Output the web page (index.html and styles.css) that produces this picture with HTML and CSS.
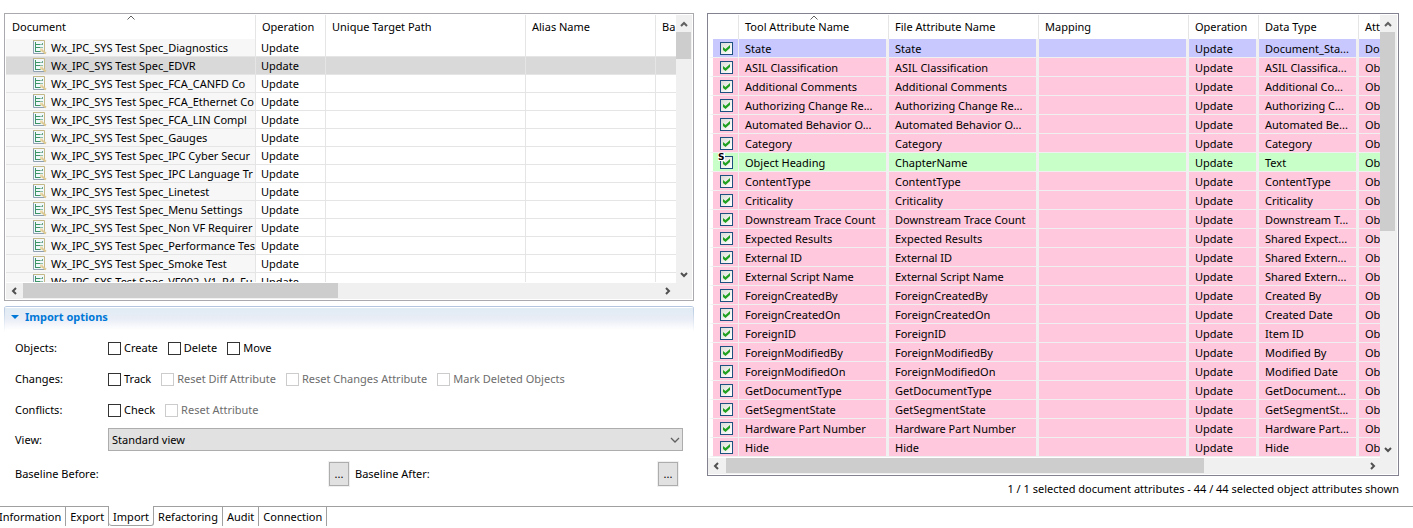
FILE: index.html
```html
<!DOCTYPE html>
<html lang="en">
<head>
<meta charset="utf-8">
<title>Import</title>
<link rel="stylesheet" href="styles.css">
</head>
<body>
<svg class="defs" aria-hidden="true">
  <symbol id="i-doc" viewBox="0 0 14 15">
    <path d="M0 1h12v13H0z" fill="#f1f8fb"/>
    <path d="M.5 1v12.500H12" fill="none" stroke="#8fa0b0"/>
    <path d="M0 .5h11.500V14" fill="none" stroke="#c5b887"/>
    <path d="M2.500 2v10M3 4.500h4M3 7.500h4M3 11.500h5" fill="none" stroke="#3c9467"/>
    <path d="M7 4.500h3M7 7.500h3" fill="none" stroke="#8fbfa6"/>
    <path d="M9.500 3v2" stroke="#6ba489"/>
    <path d="M7 8.500h3v3H7z" fill="#ead9ac"/>
    <path d="M9 10.500l4 3" stroke="#dcc993" stroke-width="2"/>
  </symbol>
  <symbol id="i-up" viewBox="0 0 8 8"><path d="M1 6l3-3 3 3" fill="none" stroke="#606060" stroke-width="2"/></symbol>
  <symbol id="i-down" viewBox="0 0 8 8"><path d="M1 2l3 3 3-3" fill="none" stroke="#505050" stroke-width="2"/></symbol>
  <symbol id="i-left" viewBox="0 0 8 8"><path d="M6 1L3 4l3 3" fill="none" stroke="#505050" stroke-width="2"/></symbol>
  <symbol id="i-right" viewBox="0 0 8 8"><path d="M2 1l3 3-3 3" fill="none" stroke="#505050" stroke-width="2"/></symbol>
  <symbol id="i-sort" viewBox="0 0 8 5"><path d="M.5 4.500L4 1l3.500 3.500" fill="none" stroke="#606060"/></symbol>
  <symbol id="i-select" viewBox="0 0 10 6"><path d="M1 1l4 4 4-4" fill="none" stroke="#606060" stroke-width="1.300"/></symbol>
</svg>

<main class="main">
  <section class="left">
    <div class="pane">
      <div class="view">
        <table class="docs">
          <colgroup><col class="c-doc"><col class="c-op"><col class="c-path"><col class="c-alias"><col class="c-base"></colgroup>
          <thead><tr><th>Document<svg class="sort"><use href="#i-sort"/></svg></th><th>Operation</th><th>Unique Target Path</th><th>Alias Name</th><th>Ba</th></tr></thead>
          <tbody id="docs"></tbody>
        </table>
      </div>
      <div class="vbar"><button aria-label="Scroll up"><svg><use href="#i-up"/></svg></button><span class="thumb thumb-docs-v"></span><button class="end" aria-label="Scroll down"><svg><use href="#i-down"/></svg></button></div>
      <div class="hbar"><button aria-label="Scroll left"><svg><use href="#i-left"/></svg></button><span class="thumb thumb-docs-h"></span><button class="end" aria-label="Scroll right"><svg><use href="#i-right"/></svg></button></div>
    </div>
    <section class="options">
      <h2><button class="toggle">Import options</button></h2>
      <div class="fields">
        <div class="field"><span class="name">Objects:</span>
          <label><input type="checkbox">Create</label><label><input type="checkbox">Delete</label><label><input type="checkbox">Move</label></div>
        <div class="field"><span class="name">Changes:</span>
          <label><input type="checkbox">Track</label><label class="off"><input type="checkbox" disabled>Reset Diff Attribute</label><label class="off"><input type="checkbox" disabled>Reset Changes Attribute</label><label class="off"><input type="checkbox" disabled>Mark Deleted Objects</label></div>
        <div class="field"><span class="name">Conflicts:</span>
          <label><input type="checkbox">Check</label><label class="off"><input type="checkbox" disabled>Reset Attribute</label></div>
        <div class="field view-field"><label class="name" for="view">View:</label>
          <div class="combo"><select id="view"><option>Standard view</option></select><svg><use href="#i-select"/></svg></div></div>
        <div class="baselines">
          <div><span>Baseline Before:</span><button class="more" aria-label="Choose baseline before">...</button></div>
          <div><span>Baseline After:</span><button class="more" aria-label="Choose baseline after">...</button></div>
        </div>
      </div>
    </section>
  </section>

  <section class="right">
    <div class="pane dark">
      <div class="view">
        <table class="attrs">
          <colgroup><col class="a-check"><col class="a-text"><col class="a-text"><col class="a-text"><col class="a-op"><col class="a-type"><col class="a-last"></colgroup>
          <thead><tr><th></th><th>Tool Attribute Name<svg class="sort"><use href="#i-sort"/></svg></th><th>File Attribute Name</th><th>Mapping</th><th>Operation</th><th>Data Type</th><th>Att</th></tr></thead>
          <tbody id="attrs"></tbody>
        </table>
      </div>
      <div class="vbar"><button aria-label="Scroll up"><svg><use href="#i-up"/></svg></button><span class="thumb thumb-attrs-v"></span><button class="end" aria-label="Scroll down"><svg><use href="#i-down"/></svg></button></div>
      <div class="hbar"><button aria-label="Scroll left"><svg><use href="#i-left"/></svg></button><span class="thumb thumb-attrs-h"></span><button class="end" aria-label="Scroll right"><svg><use href="#i-right"/></svg></button></div>
    </div>
    <p class="status">1 / 1 selected document attributes - 44 / 44 selected object attributes shown</p>
  </section>
</main>

<nav class="tabs">
  <button>Information</button><button>Export</button><button class="active">Import</button><button>Refactoring</button><button>Audit</button><button>Connection</button>
</nav>
<script src="script.js"></script>
</body>
</html>
```
FILE: styles.css
```css
* { box-sizing: border-box; }
html, body { height: 100%; }
body {
  margin: 0;
  padding-top: 13px;
  display: flex;
  flex-direction: column;
  overflow: hidden;
  background: #fff;
  color: #000;
  font: 11px/16px "Noto Sans", "Open Sans", sans-serif;
}
button, select, input { font: inherit; color: inherit; margin: 0; }
svg { display: block; }
.defs { position: absolute; width: 0; height: 0; }

.main { flex: 1; min-height: 0; display: flex; gap: 13px; padding: 0 14px 0 4px; }
.left, .right { min-width: 0; display: flex; flex-direction: column; }
.left { flex: 690 1 0; }
.right { flex: 692 1 0; }

/* Scrollable table frame */
.pane {
  flex: 1;
  min-height: 0;
  display: grid;
  grid-template: minmax(0, 1fr) 16px / minmax(0, 1fr) 16px;
  border: 1px solid #a9a9ae;
  padding: 1px;
  overflow: hidden;
}
.dark { border-color: #828290; padding-left: 0; grid-template-columns: minmax(0, 1fr) 17px; }
.view { overflow: hidden; padding-right: 1px; margin-bottom: 1px; }
.view table { border-collapse: separate; border-spacing: 0; table-layout: fixed; width: 0; }
th, td { padding: 0 6px; font-weight: normal; text-align: left; white-space: nowrap; overflow: hidden; }
th { height: 24px; position: relative; border-right: 1px solid #e5e5e5; }
.sort { position: absolute; top: 0; left: 50%; margin-left: -4px; width: 8px; height: 5px; }
.vbar, .hbar { background: #f0f0f0; display: flex; }
.vbar { flex-direction: column; }
.hbar { grid-column: 1 / -1; padding-right: 16px; }
.vbar button, .hbar button {
  flex: none; width: 16px; height: 16px; padding: 0; border: 0; background: none;
  display: grid; place-items: center;
}
.vbar button { height: 17px; }
.vbar svg, .hbar svg { width: 8px; height: 8px; }
.thumb { background: #cdcdcd; flex: none; }
.vbar .thumb { width: 15px; }
.hbar .thumb { height: 15px; }
.vbar .end { margin-top: auto; }
.hbar .end { margin-left: auto; }
.thumb-docs-v { height: 27px; }
.thumb-docs-h { width: 47%; margin-left: 1px; }
.thumb-attrs-v { height: 45%; }
.thumb-attrs-h { width: 71%; margin-left: 2px; }

/* Documents */
.c-doc { width: 250px; }
.c-op { width: 70px; }
.c-path { width: 200px; }
.c-alias { width: 130px; }
.c-base { width: 100px; }
.docs td { height: 18px; border-right: 1px solid #e5e5e5; border-bottom: 1px solid #e5e5e5; }
.docs td:first-child { background: #f7f7f7; padding: 0 0 0 27px; }
.docs tr.selected td { background: #d9d9d9; }
.docs td + td { padding-left: 5px; }
.doc { display: flex; align-items: center; gap: 4px; }
.doc svg { flex: none; width: 14px; height: 15px; }

/* Attributes */
.a-check { width: 31px; }
.a-text { width: 150px; }
.a-op { width: 70px; }
.a-type { width: 100px; }
.a-last { width: 120px; }
.attrs td {
  height: 19px;
  padding: 1px 0 0 6px;
  border-bottom: 1px solid #f0f0f0;
  border-right: 3px solid #f0f0f0;
  background: #ffc8dc;
}
.attrs td:first-child { border-left: 5px solid #fff; border-right-width: 1px; padding-left: 7px; position: relative; overflow: visible; }
.attrs tr.document td { background: #c8c8ff; }
.attrs tr.system td { background: #c8ffc8; }
.attrs input {
  appearance: none; display: grid; place-items: center;
  width: 13px; height: 13px; border: 1px solid #1c5180;
  background: linear-gradient(135deg, #dcdcd7, #fff);
}
.attrs input::before {
  content: ""; width: 7px; height: 7px; background: #21a121;
  clip-path: polygon(0 29%, 36% 57%, 100% 0, 100% 43%, 36% 100%, 0 71%);
}
.badge {
  position: absolute; left: 5px; top: 0; width: 7px; height: 8px;
  background: #fff; font: bold 9px/8px "DejaVu Sans", sans-serif;
}
.status { margin: 0; padding-top: 5px; height: 30px; text-align: right; white-space: nowrap; }

/* Import options */
.options {
  margin-top: 5px;
  border-top: 1px solid #b5c7e0;
  border-radius: 3px 3px 0 0;
  padding: 1px 1px 20px;
  background: linear-gradient(#b5c7e0, #fff 25px) left top / 1px 25px no-repeat, linear-gradient(#b5c7e0, #fff 25px) right top / 1px 25px no-repeat;
}
.options h2 { margin: 0; height: 22px; font-size: 11px; background: linear-gradient(#e0ebf3, #e9edf6 50%, #fff); }
.toggle {
  border: 0; background: none; padding: 0 0 0 6px; height: 18px;
  display: flex; align-items: center; gap: 6px;
  font-weight: bold; color: #0078d7;
}
.toggle::before { content: ""; border: 4px solid transparent; border-top-color: #0078d7; border-bottom: 0; }
.fields { padding: 10px 10px 0; display: flex; flex-direction: column; gap: 15px; }
.field { display: flex; align-items: center; gap: 10px; height: 16px; white-space: nowrap; }
.field .name { width: 83px; flex: none; }
.field label:not(.name) { display: flex; align-items: center; gap: 3px; }
.off { color: #6d6d6d; }
.field input { appearance: none; width: 13px; height: 13px; border: 1px solid #333; background: #fff; }
.field .off input { border-color: #ccc; }
.view-field { height: 23px; margin-top: -5px; }
.combo { flex: 1; position: relative; }
.combo select { appearance: none; display: block; width: 100%; height: 23px; padding: 0 3px; border: 1px solid #adadad; border-radius: 0; background: #e1e1e1; }
.combo svg { position: absolute; right: 3px; top: 9px; width: 10px; height: 6px; pointer-events: none; }
.baselines { display: grid; grid-template-columns: 334px 1fr; gap: 6px; margin-top: -4px; padding-right: 5px; }
.baselines div { display: flex; align-items: center; justify-content: space-between; }
.more { width: 20px; height: 24px; padding: 0; border: 1px solid #adadad; background: #e1e1e1; outline: 1px solid #f0f0f0; }

/* Editor page tabs */
.tabs { flex: none; height: 22px; display: flex; align-items: flex-start; background: linear-gradient(#a0a0a0, #a0a0a0) top / 100% 1px no-repeat; }
.tabs button { height: 20px; padding: 1px 4px 0; border: solid #a0a0a0; border-width: 0 1px 0 0; background: none; }
.tabs button:first-child { margin-left: -5px; }
.tabs .active { background: #fff; box-shadow: inset 0 -1px #a0a0a0; border-radius: 0 0 3px 3px; }
```
FILE: script.js
```js
const documents = ["Diagnostics", "EDVR", "FCA_CANFD Co", "FCA_Ethernet Co", "FCA_LIN Compl",
  "Gauges", "IPC Cyber Secur", "IPC Language Tr", "Linetest", "Menu Settings", "Non VF Requirer",
  "Performance Tes", "Smoke Test", "VF002_V1_R4_Fu"];

document.getElementById("docs").innerHTML = documents.map((name, i) =>
  `<tr${i === 1 ? ' class="selected"' : ""}><td><span class="doc"><svg><use href="#i-doc"/></svg>Wx_IPC_SYS Test Spec_${name}</span></td>` +
  "<td>Update</td><td></td><td></td><td></td></tr>").join("");

// [tool attribute, data type, file attribute if different, row kind]
const attributes = [
  ["State", "Document_Sta...", "", "document"],
  ["ASIL Classification", "ASIL Classifica..."],
  ["Additional Comments", "Additional Co..."],
  ["Authorizing Change Re...", "Authorizing C..."],
  ["Automated Behavior O...", "Automated Be..."],
  ["Category", "Category"],
  ["Object Heading", "Text", "ChapterName", "system"],
  ["ContentType", "ContentType"],
  ["Criticality", "Criticality"],
  ["Downstream Trace Count", "Downstream T..."],
  ["Expected Results", "Shared Expect..."],
  ["External ID", "Shared Extern..."],
  ["External Script Name", "Shared Extern..."],
  ["ForeignCreatedBy", "Created By"],
  ["ForeignCreatedOn", "Created Date"],
  ["ForeignID", "Item ID"],
  ["ForeignModifiedBy", "Modified By"],
  ["ForeignModifiedOn", "Modified Date"],
  ["GetDocumentType", "GetDocument..."],
  ["GetSegmentState", "GetSegmentSt..."],
  ["Hardware Part Number", "Hardware Part..."],
  ["Hide", "Hide"]
];

document.getElementById("attrs").innerHTML = attributes.map(([tool, type, file, kind]) =>
  `<tr class="${kind || ""}"><td><input type="checkbox" checked aria-label="${tool}">${kind === "system" ? '<span class="badge">S</span>' : ""}</td>` +
  `<td>${tool}</td><td>${file || tool}</td><td></td><td>Update</td><td>${type}</td><td>${kind === "document" ? "Do" : "Ob"}</td></tr>`).join("");
```
